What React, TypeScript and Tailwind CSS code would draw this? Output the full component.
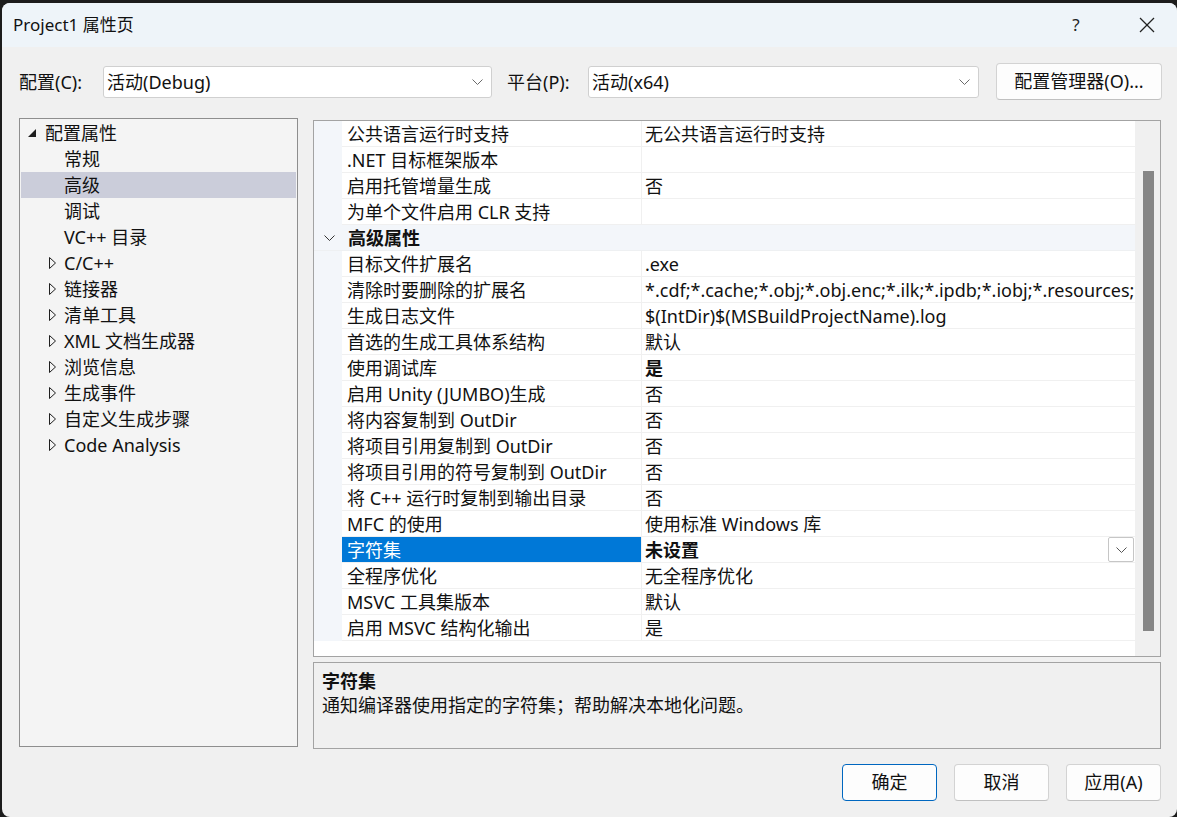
import React from 'react';

type Row = { n?: string; v?: string; bold?: boolean; selected?: boolean; cat?: string };

const rows: Row[] = [
  { n: '公共语言运行时支持', v: '无公共语言运行时支持' },
  { n: '.NET 目标框架版本', v: '' },
  { n: '启用托管增量生成', v: '否' },
  { n: '为单个文件启用 CLR 支持', v: '' },
  { cat: '高级属性' },
  { n: '目标文件扩展名', v: '.exe' },
  {
    n: '清除时要删除的扩展名',
    v: '*.cdf;*.cache;*.obj;*.obj.enc;*.ilk;*.ipdb;*.iobj;*.resources;*.tlb;*.tli;*.tlh;*.tmp;*.rsp;*.pgc;*.pgd;*.meta;*.tlog;*.manifest;*.res;*.pch;*.exp;*.idb;*.rep;*.xdc;*.pdb',
  },
  { n: '生成日志文件', v: '$(IntDir)$(MSBuildProjectName).log' },
  { n: '首选的生成工具体系结构', v: '默认' },
  { n: '使用调试库', v: '是', bold: true },
  { n: '启用 Unity (JUMBO)生成', v: '否' },
  { n: '将内容复制到 OutDir', v: '否' },
  { n: '将项目引用复制到 OutDir', v: '否' },
  { n: '将项目引用的符号复制到 OutDir', v: '否' },
  { n: '将 C++ 运行时复制到输出目录', v: '否' },
  { n: 'MFC 的使用', v: '使用标准 Windows 库' },
  { n: '字符集', v: '未设置', bold: true, selected: true },
  { n: '全程序优化', v: '无全程序优化' },
  { n: 'MSVC 工具集版本', v: '默认' },
  { n: '启用 MSVC 结构化输出', v: '是' },
];

type TreeItem = { label: string; level: 0 | 1; icon?: 'open' | 'closed'; selected?: boolean };
const tree: TreeItem[] = [
  { label: '配置属性', level: 0, icon: 'open' },
  { label: '常规', level: 1 },
  { label: '高级', level: 1, selected: true },
  { label: '调试', level: 1 },
  { label: 'VC++ 目录', level: 1 },
  { label: 'C/C++', level: 1, icon: 'closed' },
  { label: '链接器', level: 1, icon: 'closed' },
  { label: '清单工具', level: 1, icon: 'closed' },
  { label: 'XML 文档生成器', level: 1, icon: 'closed' },
  { label: '浏览信息', level: 1, icon: 'closed' },
  { label: '生成事件', level: 1, icon: 'closed' },
  { label: '自定义生成步骤', level: 1, icon: 'closed' },
  { label: 'Code Analysis', level: 1, icon: 'closed' },
];

function Chevron({ className = '' }: { className?: string }) {
  return (
    <svg width="11" height="6" viewBox="0 0 11 6" className={className}>
      <polyline points="0.5,0.5 5.5,5.5 10.5,0.5" fill="none" stroke="currentColor" strokeWidth="1" />
    </svg>
  );
}

function Combo({ value, width }: { value: string; width: string }) {
  return (
    <div
      className={`${width} shrink-0 h-[32px] bg-white border border-[#d0d0d0] rounded-[3px] flex items-center pl-[3px] pr-[8px]`}
    >
      <span className="flex-1 leading-[24px]">{value}</span>
      <Chevron className="text-[#6a6a6a]" />
    </div>
  );
}

function Btn({ label, primary }: { label: string; primary?: boolean }) {
  return (
    <div
      className={`w-[95px] h-[37px] rounded-[4px] bg-[#fdfdfd] flex items-center justify-center border ${
        primary ? 'border-[#0067c0]' : 'border-[#d3d3d3] border-b-[#c0c0c0]'
      }`}
    >
      {label}
    </div>
  );
}

export default function App() {
  return (
    <div className="w-[1177px] h-[817px] bg-[#1c1c1c] pt-[3px] pl-[2px] overflow-hidden font-['Noto_Sans','Noto_Sans_CJK_SC',sans-serif] text-[18px] text-[#111]">
      <div className="w-[1175px] h-[814px] rounded-[8px] overflow-hidden bg-[#f0f0f0] flex flex-col">
        {/* title bar */}
        <div className="h-[44px] bg-[#eef4f9] flex items-center pl-[11px] shrink-0">
          <span className="flex-1 text-[17px] leading-[24px]">Project1 属性页</span>
          <span className="w-[20px] text-center text-[17px] leading-[24px] mr-[53px] text-[#222]">?</span>
          <svg width="16" height="16" viewBox="0 0 16 16" className="mr-[22px]">
            <line x1="1" y1="1" x2="15" y2="15" stroke="#222" strokeWidth="1.2" />
            <line x1="15" y1="1" x2="1" y2="15" stroke="#222" strokeWidth="1.2" />
          </svg>
        </div>

        <div className="flex-1 flex flex-col pl-[17px] pr-[15px]">
          {/* config row */}
          <div className="mt-[16px] h-[37px] flex items-center">
            <span className="w-[84px] shrink-0 leading-[24px]">配置(C):</span>
            <Combo value="活动(Debug)" width="w-[389px]" />
            <span className="ml-[15px] w-[81px] shrink-0 leading-[24px]">平台(P):</span>
            <Combo value="活动(x64)" width="w-[391px]" />
            <div className="ml-[17px] w-[166px] shrink-0 h-[37px] rounded-[4px] bg-[#fdfdfd] border border-[#d3d3d3] border-b-[#c0c0c0] flex items-center justify-center">
              配置管理器(O)...
            </div>
          </div>

          {/* panels */}
          <div className="mt-[18px] flex gap-[15px] h-[631px]">
            {/* tree */}
            <div className="w-[279px] shrink-0 h-[629px] border border-[#8e8e8e] bg-[#f4f4f4] pt-[1px] px-[1px] overflow-hidden">
              {tree.map((t, i) => (
                <div
                  key={i}
                  className={`h-[26px] flex items-center leading-[24px] whitespace-nowrap ${t.selected ? 'bg-[#cbcdda]' : ''}`}
                >
                  {t.level === 0 ? (
                    <>
                      <span className="w-[15px] shrink-0 flex justify-end">
                        <svg width="8" height="8" viewBox="0 0 8 8">
                          <polygon points="8,0 8,8 0,8" fill="#1e1e1e" />
                        </svg>
                      </span>
                      <span className="ml-[9px]">{t.label}</span>
                    </>
                  ) : (
                    <>
                      <span className="w-[43px] shrink-0 flex justify-end pr-[8px]">
                        {t.icon === 'closed' && (
                          <svg width="7" height="12" viewBox="0 0 7 12">
                            <polygon points="0.5,0.5 6.5,6 0.5,11.5" fill="none" stroke="#1e1e1e" strokeWidth="1" />
                          </svg>
                        )}
                      </span>
                      <span>{t.label}</span>
                    </>
                  )}
                </div>
              ))}
            </div>

            {/* right column */}
            <div className="w-[848px] shrink-0 min-w-0 flex flex-col pt-[2px]">
              <div className="h-[537px] border border-[#a3a3a3] flex bg-white overflow-hidden">
                <div className="flex-1 min-w-0 flex flex-col">
                  {rows.map((r, i) =>
                    r.cat ? (
                      <div key={i} className="h-[26px] shrink-0 bg-[#f3f6fa] flex items-center pt-[1px] border-b border-[#eef0f2]">
                        <span className="w-[28px] shrink-0 flex justify-center pl-[3px]">
                          <Chevron className="text-[#333]" />
                        </span>
                        <span className="ml-[6px] font-bold leading-[23px]">{r.cat}</span>
                      </div>
                    ) : (
                      <div key={i} className="h-[26px] shrink-0 flex">
                        <div className="w-[28px] shrink-0 bg-[#f3f6fa]" />
                        <div
                          className={`w-[300px] shrink-0 border-r border-b border-[#f0f0f0] flex items-center pt-[2px] pl-[5px] whitespace-nowrap overflow-hidden leading-[23px] ${
                            r.selected ? 'bg-[#0078d7] text-white' : ''
                          }`}
                        >
                          {r.n}
                        </div>
                        <div className="flex-1 min-w-0 border-b border-[#f0f0f0] flex items-center pl-[3px] whitespace-nowrap overflow-hidden">
                          <span className={`flex-1 min-w-0 overflow-hidden pt-[2px] leading-[23px] ${r.bold ? 'font-bold' : ''}`}>{r.v}</span>
                          {r.selected && (
                            <div className="w-[26px] h-[25px] shrink-0 mr-[1px] border border-[#c6c6c6] rounded-[2px] bg-white flex items-center justify-center">
                              <Chevron className="text-[#555]" />
                            </div>
                          )}
                        </div>
                      </div>
                    )
                  )}
                </div>
                <div className="w-[25px] shrink-0 bg-[#f0f0f0] pt-[50px] pl-[8px]">
                  <div className="w-[11px] h-[460px] bg-[#868686]" />
                </div>
              </div>
              <div className="mt-[5px] h-[87px] border border-[#a3a3a3] bg-[#f0f0f0] pl-[8px] pt-[7px]">
                <div className="font-bold h-[22px] leading-[22px]">字符集</div>
                <div className="h-[26px] leading-[26px]">通知编译器使用指定的字符集；帮助解决本地化问题。</div>
              </div>
            </div>
          </div>

          {/* buttons */}
          <div className="mt-[15px] flex justify-end gap-[17px] pr-[1px]">
            <Btn label="确定" primary />
            <Btn label="取消" />
            <Btn label="应用(A)" />
          </div>
        </div>
      </div>
    </div>
  );
}
